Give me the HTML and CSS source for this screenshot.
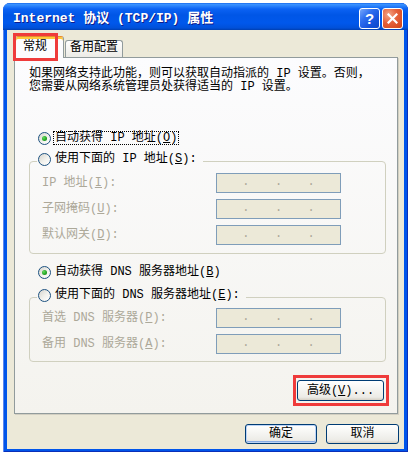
FILE: index.html
```html
<!DOCTYPE html>
<html lang="zh-CN">
<head>
<meta charset="utf-8">
<title>Internet 协议 (TCP/IP) 属性</title>
<link rel="stylesheet" href="styles.css">
</head>
<body>
<div class="window">
  <div class="titlebar">
    <span class="title">Internet 协议 (TCP/IP) 属性</span>
    <div class="caption-btns">
      <span class="cbtn help">?</span>
      <span class="cbtn close"><svg width="11" height="11" viewBox="0 0 11 11"><path d="M1.5 1.5 L9.5 9.5 M9.5 1.5 L1.5 9.5" stroke="#fff" stroke-width="2.2" stroke-linecap="square"/></svg></span>
    </div>
  </div>
  <div class="client">
    <div class="tabs">
      <div class="tab active">常规</div>
      <div class="tab">备用配置</div>
      <span class="mark mark-tab"></span>
    </div>
    <div class="panel">
      <div class="intro">
        <div class="intro-line">如果网络支持此功能，则可以获取自动指派的 IP 设置。否则，</div>
        <div class="intro-line">您需要从网络系统管理员处获得适当的 IP 设置。</div>
      </div>
      <div class="radio-row r1"><span class="radio checked"></span><span class="rlabel focus">自动获得 IP 地址(<u>O</u>)</span></div>
      <fieldset class="group g1">
        <legend><span class="radio"></span><span class="rlabel">使用下面的 IP 地址(<u>S</u>):</span></legend>
        <div class="fields">
          <span class="flabel">IP 地址(<u>I</u>):</span><span class="ipbox"><i>.</i><i>.</i><i>.</i></span>
          <span class="flabel">子网掩码(<u>U</u>):</span><span class="ipbox"><i>.</i><i>.</i><i>.</i></span>
          <span class="flabel">默认网关(<u>D</u>):</span><span class="ipbox"><i>.</i><i>.</i><i>.</i></span>
        </div>
      </fieldset>
      <div class="radio-row r3"><span class="radio checked"></span><span class="rlabel">自动获得 DNS 服务器地址(<u>B</u>)</span></div>
      <fieldset class="group g2">
        <legend><span class="radio"></span><span class="rlabel">使用下面的 DNS 服务器地址(<u>E</u>):</span></legend>
        <div class="fields">
          <span class="flabel">首选 DNS 服务器(<u>P</u>):</span><span class="ipbox"><i>.</i><i>.</i><i>.</i></span>
          <span class="flabel">备用 DNS 服务器(<u>A</u>):</span><span class="ipbox"><i>.</i><i>.</i><i>.</i></span>
        </div>
      </fieldset>
      <div class="adv-row">
        <span class="adv-wrap"><button class="btn adv">高级(<u>V</u>)...</button><span class="mark mark-adv"></span></span>
      </div>
    </div>
    <div class="actions">
      <button class="btn default">确定</button>
      <button class="btn cancel">取消</button>
    </div>
  </div>
</div>
</body>
</html>
```
FILE: styles.css
```css
html, body {
  margin: 0;
  background: #ffffff;
}
body {
  font: 12px/14px "Liberation Mono", "Noto Sans CJK SC", monospace;
  color: #000;
  padding-top: 3px;
}
.window {
  margin-left: 3px;
  width: 405px;
  height: 449px;
  display: flex;
  flex-direction: column;
  background: #0055ea;
  border-radius: 7px 7px 0 0;
  box-shadow: inset 1px 0 0 #5b86ee, inset -1px 0 0 #0a2fb8, inset 0 -1px 0 #0a2fb8;
}
.titlebar {
  flex: none;
  height: 27px;
  box-sizing: border-box;
  padding: 5px 5px 0 10px;
  display: flex;
  justify-content: space-between;
  align-items: flex-start;
  border-radius: 7px 7px 0 0;
  background: linear-gradient(to bottom, #0a5ae6 0, #3d95ff 1px, #2a82fb 3px, #0b62f3 6px, #0056e6 12px, #0058ec 20px, #0050d9 25px, #003fb0 27px);
}
.title {
  margin-top: 3px;
  color: #fff;
  font-weight: bold;
  font-size: 13px;
  line-height: 16px;
  white-space: nowrap;
  text-shadow: 1px 1px 0 #0f1b8a;
}
.caption-btns {
  display: flex;
  gap: 2px;
}
.cbtn {
  width: 21px;
  height: 21px;
  box-sizing: border-box;
  border: 1px solid #fff;
  border-radius: 3px;
  display: flex;
  align-items: center;
  justify-content: center;
}
.help {
  background: linear-gradient(135deg, #77a8fb 0%, #2f6ff0 35%, #1553dc 70%, #0d47c8 100%);
  color: #fff;
  font: bold 15px/1 "Liberation Sans", sans-serif;
}
.close {
  background: radial-gradient(circle at 30% 30%, #f3a688 0%, #e5603a 45%, #cf4316 100%);
}
.client {
  flex: 1;
  margin: 0 4px 3px 4px;
  background: #ece9d8;
  display: flex;
  flex-direction: column;
}
.tabs {
  flex: none;
  position: relative;
  height: 27px;
  box-sizing: border-box;
  padding: 6px 0 0 8px;
  display: flex;
  align-items: flex-end;
}
.tab {
  height: 17px;
  box-sizing: border-box;
  margin-left: 1px;
  padding: 0 4px;
  border: 1px solid #919b9c;
  border-bottom: none;
  border-radius: 3px 3px 0 0;
  background: linear-gradient(#ffffff, #ecebe6);
  line-height: 15px;
  white-space: nowrap;
}
.tab.active {
  position: relative;
  z-index: 1;
  width: 49px;
  height: 22px;
  margin: 0 0 -1px 0;
  padding: 2px 0 0 7px;
  border-top: 1px solid #e68b2c;
  background: #fcfcfe;
  box-shadow: inset 0 2px 0 #ffc83c;
  line-height: 16px;
}
.mark {
  position: absolute;
  box-sizing: border-box;
  border: 3px solid #ef3b3b;
  z-index: 2;
}
.mark-tab {
  left: 6px;
  top: 3px;
  width: 45px;
  height: 28px;
}
.panel {
  flex: none;
  height: 357px;
  box-sizing: border-box;
  margin: 0 6px 0 7px;
  border: 1px solid #919b9c;
  background: linear-gradient(#fcfcfe, #f4f3ee);
  box-shadow: 1px 1px 0 #d2cfc2;
  display: flex;
  flex-direction: column;
}
.intro {
  margin: 10px 0 0 14px;
  display: flex;
  flex-direction: column;
}
.intro-line {
  height: 13px;
  line-height: 13px;
  white-space: nowrap;
}
.radio-row {
  display: flex;
  align-items: center;
  height: 14px;
  margin-left: 23px;
}
.r1 { margin-top: 37px; }
.r3 { margin-top: 11px; }
.radio {
  flex: none;
  width: 13px;
  height: 13px;
  box-sizing: border-box;
  border-radius: 50%;
  border: 1px solid #1c5180;
  background: linear-gradient(135deg, #d6d5ce 0%, #f2f2ee 55%, #ffffff 100%);
}
.radio.checked::after {
  content: "";
  display: block;
  width: 5px;
  height: 5px;
  margin: 3px;
  border-radius: 50%;
  background: radial-gradient(circle at 35% 35%, #62dc5e 0%, #21a121 60%, #1a7e1a 100%);
}
.rlabel {
  margin-left: 2px;
  padding: 0 1px;
  border: 1px dotted transparent;
  line-height: 12px;
  white-space: nowrap;
}
.rlabel.focus {
  border-color: #000;
}
.group {
  min-width: 0;
  margin: 6px 11px 0 14px;
  padding: 2px 0 8px 12px;
  border: 1px solid #d0d0bf;
  border-radius: 4px;
}
.g2 {
  margin-top: 8px;
  padding-top: 1px;
  padding-bottom: 7px;
}
.group legend {
  display: flex;
  align-items: center;
  height: 20px;
  box-sizing: border-box;
  margin-left: -5px;
  padding: 1px 4px 5px 1px;
}
.fields {
  display: grid;
  grid-template-columns: 174px 125px;
  row-gap: 6px;
  align-items: center;
}
.flabel {
  color: #aca899;
  white-space: nowrap;
}
.ipbox {
  height: 20px;
  box-sizing: border-box;
  border: 1px solid #7f9db9;
  background: #ece9d8;
  display: flex;
  justify-content: space-evenly;
  align-items: center;
  padding-bottom: 3px;
  color: #aca899;
}
.ipbox i {
  font-style: normal;
  line-height: 12px;
}
.adv-row {
  display: flex;
  justify-content: flex-end;
  margin: 18px 13px 0 0;
}
.adv-wrap {
  position: relative;
  display: inline-flex;
}
.mark-adv {
  top: -5px;
  right: -5px;
  bottom: -5px;
  left: -4px;
}
.btn {
  height: 20px;
  box-sizing: border-box;
  padding: 0;
  border: 1px solid #003c74;
  border-radius: 3px;
  background: linear-gradient(#ffffff 0%, #f6f6f3 40%, #ecebe6 85%, #d6d0c5 100%);
  font: 12px/14px "Liberation Mono", "Noto Sans CJK SC", monospace;
  color: #000;
  white-space: nowrap;
}
.btn.adv {
  width: 87px;
  height: 21px;
}
.actions {
  flex: none;
  display: flex;
  justify-content: flex-end;
  gap: 9px;
  margin-top: 10px;
  padding-right: 5px;
}
.btn.default {
  width: 72px;
  box-shadow: inset 0 0 0 1px #bcd4f6, inset 0 -1px 0 1px #89ade4;
}
.btn.cancel {
  width: 73px;
}
```
